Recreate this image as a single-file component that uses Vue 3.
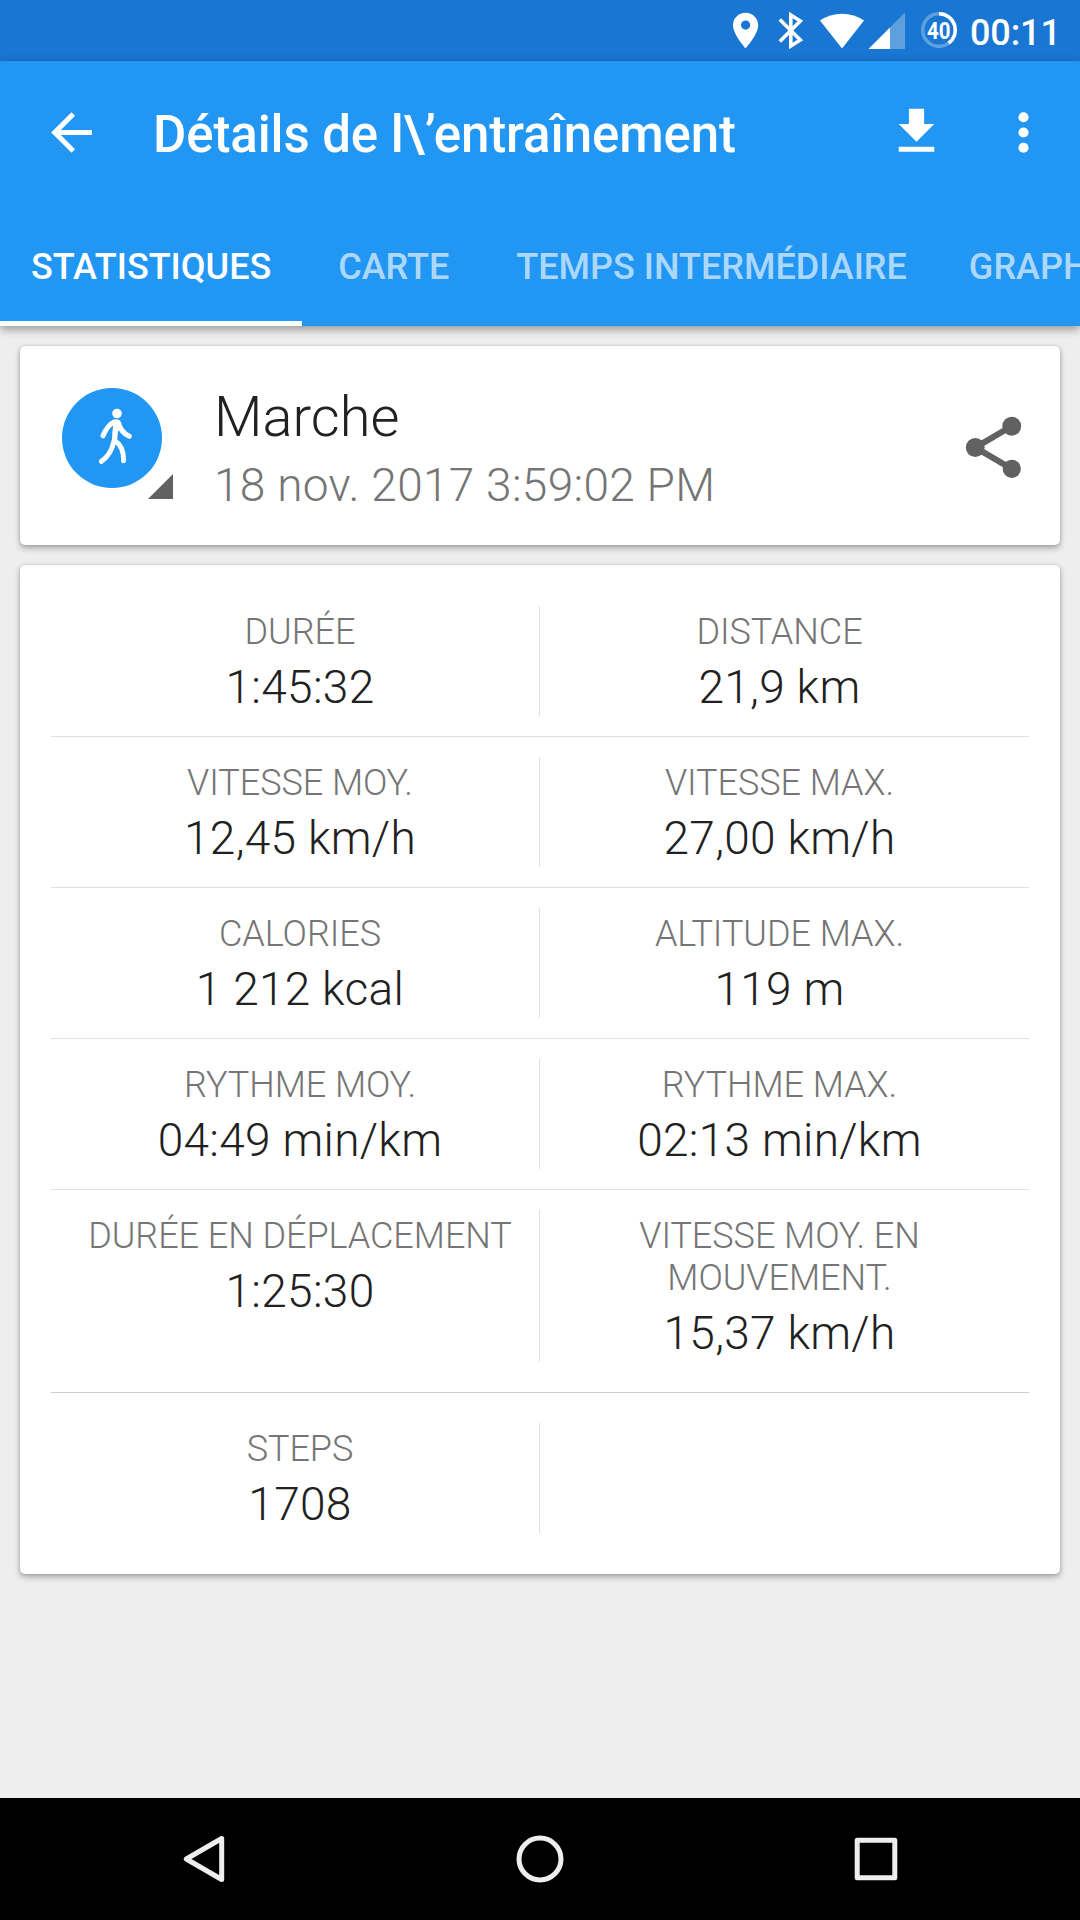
<template>
  <div class="screen">
    <div class="status-bar">
      <svg class="status-icons" viewBox="0 0 250 61">
        <path d="M20.6 12.7c-7 0-12.6 5.5-12.6 12.5 0 9.3 12.6 23.1 12.6 23.1s12.6-13.8 12.6-23.1c0-7-5.6-12.5-12.6-12.5zm0 17a4.6 4.6 0 1 1 0-9.2 4.6 4.6 0 0 1 0 9.2z" fill="#fff" />
        <path d="M54.8 19.5l20.5 20.4-9.5 6V15l9.5 6L54.800 41.6" fill="none" stroke="#fff" stroke-width="3.6" />
        <path d="M95 20.500a39 39 0 0 1 44 0L117 48.500z" fill="#fff" />
        <path d="M143.500 49L180 12.500V49z" fill="#fff" opacity="0.3" />
        <path d="M143.500 49L165 27.500V49z" fill="#fff" />
        <circle cx="214" cy="30" r="16.3" fill="none" stroke="#fff" stroke-opacity="0.3" stroke-width="3.5" />
        <path d="M214 13.700a16.300 16.300 0 0 1 9.600 29.500" fill="none" stroke="#fff" stroke-width="3.5" />
        <text x="213.7" y="38.8" text-anchor="middle" textLength="23.5" lengthAdjust="spacingAndGlyphs" class="battery">40</text>
      </svg>
      <span class="clock">00:11</span>
    </div>

    <header class="app-bar">
      <div class="toolbar">
        <svg class="icon" viewBox="0 0 24 24"><path d="M20 11H7.830l5.590-5.590L12 4l-8 8 8 8 1.410-1.410L7.830 13H20v-2z" /></svg>
        <h1>{{ title }}</h1>
        <svg class="icon download" viewBox="0 0 24 24"><path d="M19 9h-4V3H9v6H5l7 7 7-7zM5 18v2h14v-2H5z" /></svg>
        <svg class="icon" viewBox="0 0 24 24"><circle cx="12" cy="6" r="2" /><circle cx="12" cy="12" r="2" /><circle cx="12" cy="18" r="2" /></svg>
      </div>
      <nav class="tabs">
        <span v-for="t in tabs" :key="t" class="tab" :class="{ active: t === activeTab }" @click="activeTab = t">{{ t }}</span>
      </nav>
    </header>

    <main class="content">
      <section class="card summary">
        <svg class="activity" viewBox="0 0 112 112">
          <circle cx="50" cy="50" r="50" fill="#2196f3" />
          <circle cx="55" cy="25.5" r="4.8" fill="#fff" />
          <g fill="none" stroke="#fff" stroke-width="5" stroke-linecap="round" stroke-linejoin="round">
            <path d="M52 34Q45.500 37 41 47.800" />
            <path d="M56.500 35Q59 44.500 67.300 48.300" />
            <path d="M52 53Q49 67 39.400 73.300" />
            <path d="M53 53Q61.800 58 61.600 72.800" />
          </g>
          <path d="M50.500 32.500Q54 30 58 32.500L59 38Q56 41 55.300 50L55.500 55L50 56Q49.500 53 51 38z" fill="#fff" />
          <path d="M111 86v25H86z" fill="#616161" />
        </svg>
        <div class="summary-text">
          <div class="name">Marche</div>
          <div class="date">18 nov. 2017 3:59:02 PM</div>
        </div>
        <svg class="share" viewBox="0 0 24 24">
          <path d="M18 5L6 12l12 7" />
          <circle cx="18" cy="5" r="3.1" />
          <circle cx="6" cy="12" r="3.1" />
          <circle cx="18" cy="19" r="3" />
        </svg>
      </section>

      <section class="card stats">
        <div class="row" v-for="(row, i) in rows" :key="i">
          <div class="cell" v-for="(c, j) in row" :key="j">
            <div class="label">{{ c.label }}</div>
            <div class="value">{{ c.value }}</div>
          </div>
        </div>
      </section>
    </main>

    <footer class="nav-bar">
      <svg viewBox="0 0 60 60"><path d="M47.700 9.500v41L12.300 30z" /></svg>
      <svg viewBox="0 0 60 60"><circle cx="30" cy="30" r="21" /></svg>
      <svg viewBox="0 0 60 60"><rect x="11.2" y="11.2" width="37.6" height="37.6" /></svg>
    </footer>
  </div>
</template>

<script setup>
import { ref } from 'vue'

const title = 'Détails de l\\’entraînement'
const tabs = ['STATISTIQUES', 'CARTE', 'TEMPS INTERMÉDIAIRE', 'GRAPHIQUES']
const activeTab = ref('STATISTIQUES')

const rows = [
  [{ label: 'DURÉE', value: '1:45:32' }, { label: 'DISTANCE', value: '21,9 km' }],
  [{ label: 'VITESSE MOY.', value: '12,45 km/h' }, { label: 'VITESSE MAX.', value: '27,00 km/h' }],
  [{ label: 'CALORIES', value: '1 212 kcal' }, { label: 'ALTITUDE MAX.', value: '119 m' }],
  [{ label: 'RYTHME MOY.', value: '04:49 min/km' }, { label: 'RYTHME MAX.', value: '02:13 min/km' }],
  [{ label: 'DURÉE EN DÉPLACEMENT', value: '1:25:30' }, { label: 'VITESSE MOY. EN MOUVEMENT.', value: '15,37 km/h' }],
  [{ label: 'STEPS', value: '1708' }, { label: '', value: '' }],
]
</script>

<style>
body { margin: 0; background: #eee; }
</style>

<style scoped>
.screen { width: 1080px; height: 1920px; display: flex; flex-direction: column; background: #eee; font-family: Roboto, sans-serif; overflow: hidden; }
.status-bar { height: 61px; flex: none; display: flex; align-items: center; justify-content: flex-end; padding-right: 21px; box-sizing: border-box; background: #1976d2; }
.status-icons { width: 250px; height: 61px; margin-right: -5px; }
.battery { font-family: Roboto, sans-serif; font-size: 23px; font-weight: 700; fill: #fff; }
.clock { width: 89px; font-size: 36px; font-weight: 500; line-height: 42px; color: #fff; padding-top: 4px; white-space: nowrap; letter-spacing: -0.1px; }

.app-bar { height: 265px; flex: none; display: flex; flex-direction: column; background: #2196f3; box-shadow: 0 3px 9px rgba(0,0,0,0.4); z-index: 1; }
.toolbar { height: 142px; display: flex; align-items: center; padding: 0 26px 0 41px; }
.icon { width: 61px; height: 61px; flex: none; fill: #fff; }
.download { margin: 0 46px 2px 0; }
.toolbar h1 { flex: 1; margin: 0 0 0 51px; font-size: 51px; font-weight: 500; line-height: 60px; color: #fff; padding-top: 6px; white-space: nowrap; letter-spacing: -0.1px; }
.tabs { flex: 1; display: flex; overflow: hidden; }
.tab { flex: none; box-sizing: border-box; height: 123px; min-width: 183px; padding: 43px 31px 0; text-align: center; font-size: 36px; font-weight: 500; line-height: 42px; color: rgba(255,255,255,0.65); white-space: nowrap; }
.tab.active { color: #fff; border-bottom: 5px solid #fff; }

.content { flex: 1; display: flex; flex-direction: column; gap: 20px; padding: 20px; }
.card { background: #fff; border-radius: 5px; box-shadow: 0 3px 6px rgba(0,0,0,0.3), 0 0 3px rgba(0,0,0,0.18); }
.summary { height: 199px; display: flex; box-sizing: border-box; padding: 42px 30px 0 42px; }
.activity { width: 112px; height: 112px; }
.summary-text { flex: 1; margin-left: 40px; font-weight: 300; }
.name { font-size: 56px; line-height: 66px; color: #212121; margin-top: -4px; }
.date { font-size: 46px; line-height: 54px; color: #757575; margin-top: 8px; letter-spacing: 0.3px; }
.share { width: 73px; height: 73px; margin-top: 23px; fill: #616161; }
.share path { fill: none; stroke: #616161; stroke-width: 2; }

.stats { padding: 21px 31px; }
.row { display: grid; grid-template-columns: 489px 489px; padding: 20px 0; border-bottom: 1px solid #e0e0e0; }
.row:nth-child(5) { padding-bottom: 30px; border-color: #ccc; }
.row:nth-child(6) { padding: 30px 0 20px; border-bottom: none; }
.cell { box-sizing: border-box; min-height: 110px; padding: 5px 10px 2px 0; text-align: center; font-weight: 300; }
.cell:first-child { border-right: 1px solid #e0e0e0; padding: 5px 0 2px 10px; }
.label { font-size: 36px; line-height: 42px; color: #757575; letter-spacing: -0.05px; }
.value { font-size: 46px; line-height: 54px; color: #212121; margin-top: 7px; letter-spacing: 0.3px; }

.nav-bar { height: 122px; flex: none; display: flex; align-items: center; justify-content: space-between; padding: 0 174px; background: #000; }
.nav-bar svg { width: 60px; height: 60px; fill: none; stroke: #eee; stroke-width: 5; stroke-linejoin: round; }
</style>
